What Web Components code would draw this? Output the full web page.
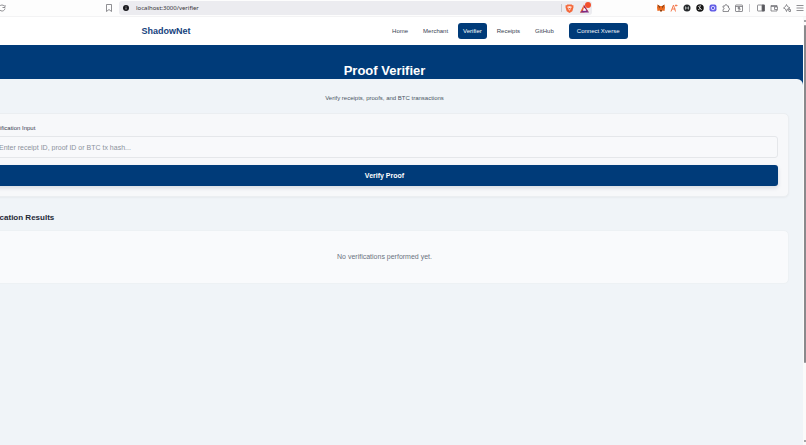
<!DOCTYPE html>
<html lang="en">
<head>
<meta charset="utf-8">
<title>ShadowNet – Proof Verifier</title>
<style>
html, body { height: 100%; margin: 0; }
body { overflow: hidden; background: #fff; font-family: "Liberation Sans", Arial, sans-serif; color: #4b5563; display: flex; flex-direction: column; }
</style>
</head>
<body>
<browser-bar address="localhost:3000/verifier"></browser-bar>
<page-view>
  <site-header>
    <nav-link href="#home">Home</nav-link>
    <nav-link href="#merchant">Merchant</nav-link>
    <nav-link href="#verifier" active>Verifier</nav-link>
    <nav-link href="#receipts">Receipts</nav-link>
    <nav-link href="#github">GitHub</nav-link>
  </site-header>
  <page-hero>Proof Verifier</page-hero>
  <page-panel>
    <span slot="subtitle">Verify receipts, proofs, and BTC transactions</span>
    <verify-form></verify-form>
    <result-list heading="Verification Results">No verifications performed yet.</result-list>
  </page-panel>
</page-view>
<script>
function define(name, html, ready) {
  const template = document.createElement('template');
  template.innerHTML = html;
  customElements.define(name, class extends HTMLElement {
    connectedCallback() {
      if (this.shadowRoot) return;
      this.attachShadow({ mode: 'open' }).append(template.content.cloneNode(true));
      if (ready) ready(this, this.shadowRoot);
    }
  });
}

define('browser-bar', `
<style>
:host { display: flex; align-items: center; flex: none; height: 16px; border-bottom: 1px solid #f3f3f4; background: #fdfdfd; }
button { border: 0; padding: 0; background: none; display: flex; align-items: center; justify-content: center; width: 13px; height: 14px; flex: none; }
svg { width: 8px; height: 8px; display: block; fill: none; stroke: #6b6b70; stroke-width: 1.5; overflow: visible; }
.reload { margin-left: -5px; }
.mark { margin-left: 94px; margin-right: 4px; }
.address { flex: 1; min-width: 0; height: 14px; margin-right: 62px; border-radius: 3px; background: #ececf0; display: flex; align-items: center; overflow: hidden; }
input { flex: 1; min-width: 0; border: 0; padding: 0; margin-left: 4px; background: none; font: 6px/8px "Noto Sans", sans-serif; color: #333338; }
.rule { width: 1px; height: 8px; background: #c9c9cd; flex: none; }
.split { margin: 0 4px; }
.shields { margin-left: 1px; }
.rewards { position: relative; margin: 0 1px 0 2px; }
.shields svg, .rewards svg { width: 9px; height: 9px; }
.badge { position: absolute; right: 0; top: 1px; width: 6px; height: 6px; border-radius: 50%; background: #f3502d; }
</style>
<button class="reload" aria-label="Reload"><svg viewBox="0 0 16 16"><path d="M12.5 4A6 6 0 1 0 14 9M14 2v5H9"/></svg></button>
<button class="mark" aria-label="Bookmark"><svg viewBox="0 0 16 16"><path d="M3 1h10v14l-5-4-5 4z"/></svg></button>
<div class="address">
  <button aria-label="Site information"><svg viewBox="0 0 16 16"><circle cx="8" cy="8" r="6" fill="#17171b" stroke="none"/><path d="M8 7v4M8 4.5v1" stroke="#ddd"/></svg></button>
  <input aria-label="Address" readonly>
  <span class="rule"></span>
  <button class="shields" aria-label="Shields"><svg viewBox="0 0 16 16"><path d="M4 1h8l1 1h2v4l-2 7-5 3-5-3-2-7V2h2z" fill="#f4683a" stroke="none"/><path d="M4 5l4-1 4 1-2 4-2 3-2-3z" fill="#fff" stroke="none"/><path d="M5 6l3 1 3-1-3 4z" fill="#f4683a" stroke="none"/></svg></button>
  <button class="rewards" aria-label="Rewards"><svg viewBox="0 0 16 16"><path d="M7 1L0 15h8L6.500 9z" fill="#f0602c" stroke="none"/><path d="M0 15h16l-4-4H5z" fill="#7b2a86" stroke="none"/><path d="M7 1l9 14-4-3-5-6z" fill="#a52b59" stroke="none"/><path d="M7.500 7L5 12h6z" fill="#fff" stroke="none"/></svg><span class="badge"></span></button>
</div>
<button aria-label="Wallet fox"><svg viewBox="0 0 16 16"><path d="M1 1l5 3h4l5-3 1 6-1 7-4-1-2 2H7l-2-2-4 1-1-7z" fill="#ec6a20" stroke="none"/><path d="M1 1l5 4-1 4zM15 1l-5 4 1 4zM6 12h4l-1 3H7z" fill="#763d16" stroke="none"/></svg></button>
<button aria-label="Extension A"><svg viewBox="0 0 16 16"><path d="M2 15L7 2l4 13M4 10h7M12 1v4M10 3h5" style="stroke:#f47b50;stroke-width:2"/></svg></button>
<button aria-label="Extension H"><svg viewBox="0 0 16 16"><circle cx="8" cy="8" r="7" fill="#25282b" stroke="none"/><path d="M5 5v6M11 5v6M5 8h6" style="stroke:#c7cccc"/></svg></button>
<button aria-label="Xverse"><svg viewBox="0 0 16 16"><circle cx="8" cy="8" r="7.500" fill="#151515" stroke="none"/><path d="M5 4l6 8M10 4H7M5 12l2-3" style="stroke:#fff;stroke-width:1.800"/></svg></button>
<button aria-label="Extension purple"><svg viewBox="0 0 16 16"><rect x="1" y="1" width="14" height="14" rx="4" fill="#615ce5" stroke="none"/><circle cx="8" cy="8" r="3.500" style="stroke:#d9d8ff;stroke-width:2"/></svg></button>
<button aria-label="Extensions"><svg viewBox="0 0 16 16"><path d="M2 4h4c-1-4 5-4 4 0h3v4c3-1 3 5 0 4v3H2v-4c3 0 3-4 0-4z"/></svg></button>
<button aria-label="Reader"><svg viewBox="0 0 16 16"><rect x="1" y="2" width="14" height="13" rx="1"/><path d="M1 5h14M10 7H6v2h4v3H6"/></svg></button>
<span class="rule split"></span>
<button aria-label="Side panel"><svg viewBox="0 0 16 16"><rect x="1" y="2" width="14" height="12" rx="1"/><path d="M10 2h5v12h-5z" fill="#55555a"/></svg></button>
<button aria-label="Wallet"><svg viewBox="0 0 16 16"><path d="M14 6V3H2v11h12v-3M2 5h12M9 6h6v5H9z"/></svg></button>
<button aria-label="Assistant"><svg viewBox="0 0 16 16"><path d="M7 1l2 4 5 3-5 2-2 5-2-5-4-2 4-3zM11 11h4v4h-3z"/></svg></button>
<button aria-label="Menu"><svg viewBox="0 0 16 16"><path d="M1 3h14M1 8h14M1 13h14"/></svg></button>
`, (el, root) => { root.querySelector('input').value = el.getAttribute('address'); });

define('page-view', `
<style>
:host { display: flex; flex: 1; min-height: 0; overflow: hidden; }
.page { flex: 1; min-width: 0; margin-left: -34px; display: flex; flex-direction: column; }
.track { width: 3px; flex: none; background: #fafafa; display: flex; flex-direction: column; align-items: flex-end; padding: 3px 0; box-sizing: border-box; }
.arrow { width: 2px; height: 2px; background: #89898c; border-radius: 1px; flex: none; }
.thumb { width: 2px; height: 80%; margin: 3px 0 auto; background: #89898c; border-radius: 1px; }
</style>
<div class="page"><slot></slot></div>
<div class="track"><div class="arrow"></div><div class="thumb"></div><div class="arrow"></div></div>
`);

define('site-header', `
<style>
:host { display: block; background: #fff; }
header { max-width: 486px; height: 28px; margin: 0 auto; display: flex; align-items: center; justify-content: space-between; }
.brand { font-size: 9px; line-height: 12px; font-weight: 700; color: #16427d; text-decoration: none; }
nav { display: flex; align-items: center; gap: 5px; }
button { border: 0; margin-left: 5px; padding: 4px 8px; border-radius: 3px; background: #003b79; color: #f2f6fb; font: 6px/8px "Liberation Sans", Arial, sans-serif; }
</style>
<header><a class="brand" href="#home">ShadowNet</a><nav><slot></slot><button>Connect Xverse</button></nav></header>
`);

define('nav-link', `
<style>
:host { display: block; }
a { display: block; padding: 4px 5px; border-radius: 3px; font-size: 6px; line-height: 8px; color: #374151; text-decoration: none; }
:host([active]) a { background: #003b79; color: #fff; }
</style>
<a><slot></slot></a>
`, (el, root) => { root.querySelector('a').href = el.getAttribute('href'); });

define('page-hero', `
<style>
:host { display: block; background: #003b79; padding: 18px 0 8px; }
h1 { margin: 0; font-size: 13px; line-height: 16px; font-weight: 700; color: #fff; text-align: center; }
</style>
<h1><slot></slot></h1>
`);

define('page-panel', `
<style>
:host { display: block; flex: 1; background: #003b79; margin-top: -8px; }
main { box-sizing: border-box; height: 100%; border-radius: 6px 6px 0 0; background: #f0f4f8; padding: 15px 14px; }
p { margin: 0 0 11px; font-size: 6px; line-height: 8px; text-align: center; color: #4b5563; }
</style>
<main><p><slot name="subtitle"></slot></p><slot></slot></main>
`);

define('verify-form', `
<style>
:host { display: block; }
form { border: 1px solid #ebeef1; border-radius: 5px; background: #f7f8fa; padding: 10px; box-shadow: 0 1px 2px #0000000a; }
label { display: block; margin-bottom: 4px; font-size: 6px; line-height: 8px; color: #374151; }
input { display: block; box-sizing: border-box; width: 100%; height: 22px; padding: 0 7px; border: 1px solid #e5e7ea; border-radius: 3px; background: #f8f9fb; font: 7px/10px "Liberation Sans", Arial, sans-serif; color: #374151; }
input::placeholder { color: #8c929b; opacity: 1; }
button { display: block; width: 100%; margin-top: 7px; border: 0; border-radius: 3px; padding: 6px; background: #003b79; color: #fff; font: 700 7px/9px "Liberation Sans", Arial, sans-serif; box-shadow: 0 2px 4px #00204022; }
</style>
<form><label for="proof">Verification Input</label><input id="proof" placeholder="Enter receipt ID, proof ID or BTC tx hash..."><button type="button">Verify Proof</button></form>
`);

define('result-list', `
<style>
:host { display: block; margin-top: 16px; }
h2 { margin: 0 0 7px; font-size: 8px; line-height: 10px; font-weight: 700; color: #1f2937; }
.empty { border: 1px solid #edf1f4; border-radius: 5px; background: #f9fafc; padding: 21px; text-align: center; font-size: 7px; line-height: 10px; color: #6b7280; }
</style>
<section><h2></h2><div class="empty"><slot></slot></div></section>
`, (el, root) => { root.querySelector('h2').textContent = el.getAttribute('heading'); });
</script>
</body>
</html>
